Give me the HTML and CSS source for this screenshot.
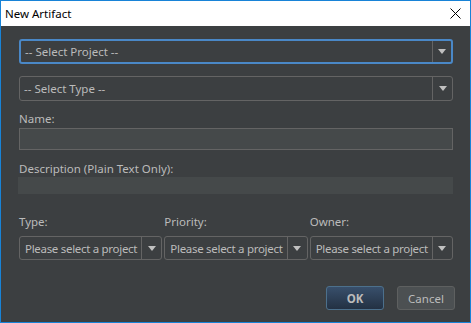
FILE: index.html
```html
<!DOCTYPE html>
<html lang="en">
<head>
    <meta charset="UTF-8">
    <title>New Artifact</title>
    <link rel="stylesheet" href="styles.css">
</head>
<body>
    <div class="dialog">
        <div class="titlebar">
            <span class="title">New Artifact</span>
            <svg class="close" width="11" height="11" viewBox="0 0 11 11">
                <path d="M0.5 0.5 L10.5 10.5 M10.5 0.5 L0.5 10.5" stroke="#000" stroke-width="1" fill="none"/>
            </svg>
        </div>
        <div class="content">
            <div class="combo focused">
                <span class="combo-text">-- Select Project --</span>
                <span class="combo-arrow"></span>
            </div>
            <div class="combo type-combo">
                <span class="combo-text">-- Select Type --</span>
                <span class="combo-arrow"></span>
            </div>

            <label class="field-label">Name:</label>
            <div class="text-input"></div>

            <label class="field-label desc-label">Description (Plain Text Only):</label>
            <div class="text-area"></div>

            <div class="triple">
                <div class="col">
                    <label class="field-label small-label">Type:</label>
                    <div class="combo small">
                        <span class="combo-text">Please select a project</span>
                        <span class="combo-arrow"></span>
                    </div>
                </div>
                <div class="col">
                    <label class="field-label small-label">Priority:</label>
                    <div class="combo small">
                        <span class="combo-text">Please select a project</span>
                        <span class="combo-arrow"></span>
                    </div>
                </div>
                <div class="col">
                    <label class="field-label small-label">Owner:</label>
                    <div class="combo small">
                        <span class="combo-text">Please select a project</span>
                        <span class="combo-arrow"></span>
                    </div>
                </div>
            </div>

            <div class="buttons">
                <button class="btn primary">OK</button>
                <button class="btn">Cancel</button>
            </div>
        </div>
    </div>
</body>
</html>
```

FILE: styles.css
```css
:root {
    --bg: #3c3f41;
    --field-bg: #45494a;
    --field-border: #646464;
    --text: #bbbbbb;
    --focus: #4a88c7;
    --frame: #1883d7;
}

* {
    margin: 0;
    padding: 0;
    box-sizing: border-box;
}

body {
    background: var(--bg);
    font-family: "Noto Sans", "Open Sans", sans-serif;
    font-size: 11.5px;
    color: var(--text);
}

.dialog {
    width: 471px;
    height: 323px;
    border: 1px solid var(--frame);
    display: flex;
    flex-direction: column;
    background: var(--bg);
}

/* Windows title bar */
.titlebar {
    height: 25px;
    background: #fff;
    display: flex;
    align-items: center;
    justify-content: space-between;
    padding: 0 9px 0 4px;
    flex-shrink: 0;
}

.title {
    color: #000;
    font-size: 11.5px;
}

.content {
    flex-grow: 1;
    padding: 13px 17px 0 18px;
    display: flex;
    flex-direction: column;
}

.combo {
    height: 25px;
    border: 1px solid var(--field-border);
    border-radius: 3px;
    display: flex;
    align-items: center;
    flex-shrink: 0;
}

.combo.focused {
    border: 2px solid var(--focus);
    margin-bottom: 12px;
}

.type-combo {
    margin-bottom: 11px;
}

.combo-text {
    flex-grow: 1;
    padding-left: 4px;
    white-space: nowrap;
    overflow: hidden;
}

.combo-arrow {
    width: 20px;
    height: 100%;
    border-left: 1px solid var(--field-border);
    display: flex;
    align-items: center;
    justify-content: center;
    flex-shrink: 0;
}

.combo.focused .combo-arrow {
    width: 19px;
}

.combo-arrow::after {
    content: '';
    border-left: 4px solid transparent;
    border-right: 4px solid transparent;
    border-top: 5px solid #c0c0c0;
}

.field-label {
    display: block;
    line-height: 14px;
    margin-bottom: 2px;
    white-space: nowrap;
}

.desc-label {
    margin-bottom: 1px;
}

.small-label {
    margin-bottom: 7px;
}

.text-input {
    height: 22px;
    background: var(--field-bg);
    border: 1px solid var(--field-border);
    margin-bottom: 12px;
    flex-shrink: 0;
}

.text-area {
    height: 17px;
    background: var(--field-bg);
    margin-left: -1px;
    margin-bottom: 21px;
    flex-shrink: 0;
}

.triple {
    display: flex;
    gap: 2px;
}

.col {
    flex: 1;
    min-width: 0;
}

.combo.small {
    height: 24px;
}

.combo.small .combo-text {
    letter-spacing: -0.3px;
    padding-left: 5px;
}

.buttons {
    display: flex;
    justify-content: flex-end;
    gap: 13px;
    margin-top: 26px;
    margin-right: -2px;
}

.btn {
    width: 58px;
    height: 24px;
    font-family: inherit;
    font-size: 11.5px;
    color: var(--text);
    background: #4c5052;
    border: 1px solid #5e6060;
    border-radius: 3px;
}

.btn.primary {
    background: linear-gradient(#384f6b, #233143);
    border-color: #4c708c;
    font-weight: bold;
}
```
